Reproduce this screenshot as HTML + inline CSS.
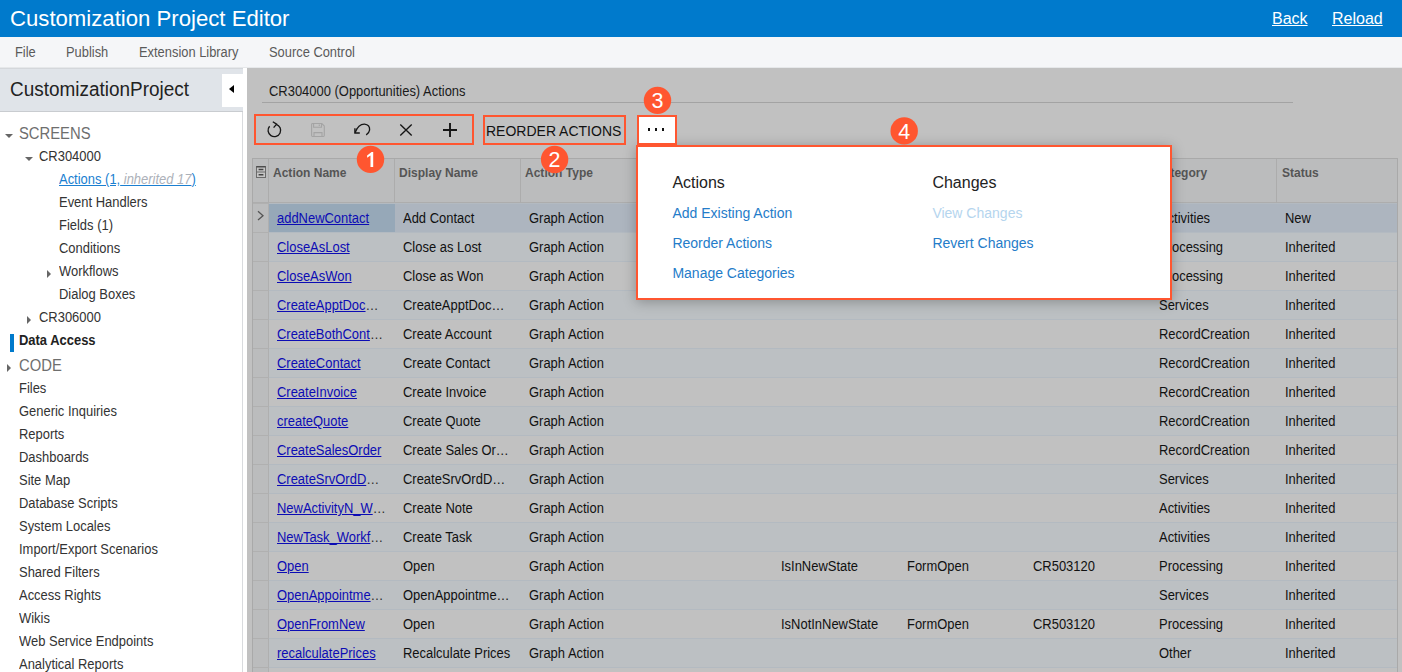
<!DOCTYPE html>
<html>
<head>
<meta charset="utf-8">
<style>
*{box-sizing:border-box;margin:0;padding:0}
html,body{width:1402px;height:672px;overflow:hidden;background:#c1c1c1;font-family:"Liberation Sans",sans-serif;font-size:14px;color:#1a1a1a}
.sx{display:inline-block;transform-origin:0 50%;white-space:nowrap}
#hdr{position:absolute;left:0;top:0;width:1402px;height:37px;background:#007acc;color:#fff}
#hdr .t{position:absolute;left:10px;top:6px;font-size:22px;line-height:26px;white-space:nowrap}
#hdr .l{position:absolute;top:9px;font-size:16px;line-height:20px;color:#fff;white-space:nowrap}
#hdr .l .sx{text-decoration:underline}
#menu{position:absolute;left:0;top:37px;width:1402px;height:31px;background:#f5f6f8;border-bottom:1px solid #e6e8ea}
#menu div{position:absolute;top:7px;font-size:14px;line-height:16px;color:#5a5a5a;white-space:nowrap}
#lp{position:absolute;left:0;top:68px;width:247px;height:604px;background:#fff}
#lph{position:absolute;left:0;top:0;width:243px;height:44px;background:#e0e4e9;border-top:1px solid #d4d7db;border-bottom:1px solid #c9ccd0}
#lph .t{position:absolute;left:10px;top:8px;font-size:20px;line-height:24px;color:#222;white-space:nowrap}
#lph .btn{position:absolute;left:222px;top:5px;width:21px;height:33px;background:#fff}
#lph .btn i{position:absolute;left:7px;top:11px;width:0;height:0;border-top:4px solid transparent;border-bottom:4px solid transparent;border-right:5px solid #000}
#lpb{position:absolute;left:0;top:44px;width:243px;height:560px;border-right:1px solid #d9dbde}
.ti{position:absolute;font-size:14px;line-height:16px;color:#333;white-space:nowrap}
.ti.g{font-size:16px;line-height:18px;color:#6e6e6e}
.ti.b{font-weight:bold;color:#222}
.ti.a{color:#1a7fd1}
.ti.a .sx{text-decoration:underline}
.ti.a i{color:#acb1b9}
.ard{position:absolute;width:0;height:0;border-left:4px solid transparent;border-right:4px solid transparent;border-top:4px solid #666}
.arr{position:absolute;width:0;height:0;border-top:4px solid transparent;border-bottom:4px solid transparent;border-left:4px solid #666}
#main{position:absolute;left:247px;top:68px;width:1155px;height:604px;background:#c1c1c1}

#ttl{position:absolute;left:269px;top:83px;font-size:14px;line-height:16px;color:#1a1a1a;white-space:nowrap}
#ttlu{position:absolute;left:262px;top:102px;width:1031px;height:1px;background:#a3a3a3}
.ob{position:absolute;border:2px solid #ff5630}
.cir{position:absolute;width:27px;height:27px;border-radius:50%;background:#ff5630;color:#fff;font-size:21px;line-height:28px;text-align:center}
.ic{position:absolute}
#grid{position:absolute;left:252px;top:158px;width:1146px;height:520px;border-left:1px solid #a9a9a9;border-top:1px solid #a9a9a9;border-right:1px solid #a9a9a9;background:#c1c1c1;overflow:hidden}
#gh{position:absolute;left:0;top:0;width:1146px;height:44px;background:#bbbcbd;border-bottom:1px solid #adadad}
#gh .c{position:absolute;top:0;height:44px;border-left:1px solid #acacac;font-size:13px;font-weight:bold;color:#555;line-height:15px;padding:6px 0 0 4px;white-space:nowrap}
.r{position:absolute;left:0;width:1146px;height:29px;border-top:1px solid #b3bac1}
.r.e{background:#bcc0c3}
.r.s{background:#adb5bf}
.r .i{position:absolute;left:0;top:-1px;width:16px;height:29px;background:#bbbcbd;border-top:1px solid #b0b0b0;border-right:1px solid #afafaf}
.r .c{position:absolute;top:0;height:28px;font-size:14px;line-height:16px;padding:6px 0 0 8px;white-space:nowrap;color:#111}
.r .c.a{color:#0c0cb4}
.r .c.a u{text-decoration:underline}
.r .c.a b{font-weight:normal;color:#2a2a2a}
#pop{position:absolute;left:636px;top:145px;width:536px;height:155px;background:#fff;border:2px solid #ff5630;box-shadow:0 2px 12px rgba(0,0,0,.27)}
#pop .h{position:absolute;font-size:16px;line-height:18px;color:#222;white-space:nowrap}
#pop .l{position:absolute;font-size:14px;line-height:16px;color:#247cc9;white-space:nowrap}
#pop .l.d{color:#b5d5ee}
#more{position:absolute;left:637px;top:115px;width:40px;height:30px;background:#fff;border:2px solid #ff5630}
#more i{position:absolute;top:11.2px;width:2.2px;height:2.4px;background:#111}
</style>
</head>
<body>
<div id="hdr"><div class="t"><span class="sx" style="transform:scaleX(1.007)">Customization Project Editor</span></div><div class="l" style="left:1272px"><span class="sx" style="transform:scaleX(1)">Back</span></div><div class="l" style="left:1332px"><span class="sx" style="transform:scaleX(1)">Reload</span></div></div>
<div id="menu"><div style="left:15px"><span class="sx" style="transform:scaleX(0.92)">File</span></div><div style="left:66px"><span class="sx" style="transform:scaleX(0.92)">Publish</span></div><div style="left:139px"><span class="sx" style="transform:scaleX(0.92)">Extension Library</span></div><div style="left:269px"><span class="sx" style="transform:scaleX(0.92)">Source Control</span></div></div>
<div id="lp">
 <div id="lph"><div class="t"><span class="sx" style="transform:scaleX(0.947)">CustomizationProject</span></div><div class="btn"><i></i></div></div>
 <div id="lpb"></div>
</div>
<div class="ti g" style="left:19px;top:124.5px"><span class="sx" style="transform:scaleX(0.925)">SCREENS</span></div>
<div class="ti " style="left:39px;top:148.0px"><span class="sx" style="transform:scaleX(0.925)">CR304000</span></div>
<div class="ti a" style="left:59px;top:171.0px"><span class="sx" style="transform:scaleX(0.925)">Actions (1,<i> inherited 17</i>)</span></div>
<div class="ti " style="left:59px;top:194.0px"><span class="sx" style="transform:scaleX(0.925)">Event Handlers</span></div>
<div class="ti " style="left:59px;top:217.0px"><span class="sx" style="transform:scaleX(0.925)">Fields (1)</span></div>
<div class="ti " style="left:59px;top:240.0px"><span class="sx" style="transform:scaleX(0.925)">Conditions</span></div>
<div class="ti " style="left:59px;top:263.0px"><span class="sx" style="transform:scaleX(0.925)">Workflows</span></div>
<div class="ti " style="left:59px;top:286.0px"><span class="sx" style="transform:scaleX(0.925)">Dialog Boxes</span></div>
<div class="ti " style="left:39px;top:309.0px"><span class="sx" style="transform:scaleX(0.925)">CR306000</span></div>
<div class="ti b" style="left:19px;top:332.0px"><span class="sx" style="transform:scaleX(0.925)">Data Access</span></div>
<div class="ti g" style="left:19px;top:356.5px"><span class="sx" style="transform:scaleX(0.925)">CODE</span></div>
<div class="ti " style="left:19px;top:380.0px"><span class="sx" style="transform:scaleX(0.925)">Files</span></div>
<div class="ti " style="left:19px;top:403.0px"><span class="sx" style="transform:scaleX(0.925)">Generic Inquiries</span></div>
<div class="ti " style="left:19px;top:426.0px"><span class="sx" style="transform:scaleX(0.925)">Reports</span></div>
<div class="ti " style="left:19px;top:449.0px"><span class="sx" style="transform:scaleX(0.925)">Dashboards</span></div>
<div class="ti " style="left:19px;top:472.0px"><span class="sx" style="transform:scaleX(0.925)">Site Map</span></div>
<div class="ti " style="left:19px;top:495.0px"><span class="sx" style="transform:scaleX(0.925)">Database Scripts</span></div>
<div class="ti " style="left:19px;top:518.0px"><span class="sx" style="transform:scaleX(0.925)">System Locales</span></div>
<div class="ti " style="left:19px;top:541.0px"><span class="sx" style="transform:scaleX(0.925)">Import/Export Scenarios</span></div>
<div class="ti " style="left:19px;top:564.0px"><span class="sx" style="transform:scaleX(0.925)">Shared Filters</span></div>
<div class="ti " style="left:19px;top:587.0px"><span class="sx" style="transform:scaleX(0.925)">Access Rights</span></div>
<div class="ti " style="left:19px;top:610.0px"><span class="sx" style="transform:scaleX(0.925)">Wikis</span></div>
<div class="ti " style="left:19px;top:633.0px"><span class="sx" style="transform:scaleX(0.925)">Web Service Endpoints</span></div>
<div class="ti " style="left:19px;top:656.0px"><span class="sx" style="transform:scaleX(0.925)">Analytical Reports</span></div>
<div class="ard" style="left:5px;top:134px"></div>
<div class="ard" style="left:25px;top:157px"></div>
<div class="arr" style="left:47px;top:270px"></div>
<div class="arr" style="left:27px;top:316px"></div>
<div class="arr" style="left:7.4px;top:364px"></div>
<div style="position:absolute;left:10px;top:334px;width:4px;height:18px;background:#007acc"></div>
<div id="main"></div>
<div id="ttl"><span class="sx" style="transform:scaleX(0.925)">CR304000 (Opportunities) Actions</span></div><div id="ttlu"></div>
<div id="grid">
<div id="gh">
<div class="c" style="left:15px;width:126px"><span class="sx" style="transform:scaleX(0.925)">Action Name</span></div>
<div class="c" style="left:141px;width:126px"><span class="sx" style="transform:scaleX(0.925)">Display Name</span></div>
<div class="c" style="left:267px;width:126px"><span class="sx" style="transform:scaleX(0.925)">Action Type</span></div>
<div class="c" style="left:393px;width:126px"><span class="sx" style="transform:scaleX(0.925)"></span></div>
<div class="c" style="left:519px;width:126px"><span class="sx" style="transform:scaleX(0.925)"></span></div>
<div class="c" style="left:645px;width:126px"><span class="sx" style="transform:scaleX(0.925)"></span></div>
<div class="c" style="left:771px;width:126px"><span class="sx" style="transform:scaleX(0.925)"></span></div>
<div class="c" style="left:897px;width:126px"><span class="sx" style="transform:scaleX(0.925)">Category</span></div>
<div class="c" style="left:1023px;width:122px;padding-left:5.4px"><span class="sx" style="transform:scaleX(0.925)">Status</span></div>
</div>
<div class="r s" style="top:44px"><div class="i"></div>
<div class="c a" style="left:16px;background:#96a8b8;width:126px"><span class="sx" style="transform:scaleX(0.925)"><u>addNewContact</u></span></div>
<div class="c" style="left:142px"><span class="sx" style="transform:scaleX(0.925)">Add Contact</span></div>
<div class="c" style="left:268px"><span class="sx" style="transform:scaleX(0.925)">Graph Action</span></div>
<div class="c" style="left:898px"><span class="sx" style="transform:scaleX(0.925)">Activities</span></div>
<div class="c" style="left:1024px"><span class="sx" style="transform:scaleX(0.925)">New</span></div>
</div>
<div class="r e" style="top:73px"><div class="i"></div>
<div class="c a" style="left:16px"><span class="sx" style="transform:scaleX(0.925)"><u>CloseAsLost</u></span></div>
<div class="c" style="left:142px"><span class="sx" style="transform:scaleX(0.925)">Close as Lost</span></div>
<div class="c" style="left:268px"><span class="sx" style="transform:scaleX(0.925)">Graph Action</span></div>
<div class="c" style="left:898px"><span class="sx" style="transform:scaleX(0.925)">Processing</span></div>
<div class="c" style="left:1024px"><span class="sx" style="transform:scaleX(0.925)">Inherited</span></div>
</div>
<div class="r " style="top:102px"><div class="i"></div>
<div class="c a" style="left:16px"><span class="sx" style="transform:scaleX(0.925)"><u>CloseAsWon</u></span></div>
<div class="c" style="left:142px"><span class="sx" style="transform:scaleX(0.925)">Close as Won</span></div>
<div class="c" style="left:268px"><span class="sx" style="transform:scaleX(0.925)">Graph Action</span></div>
<div class="c" style="left:898px"><span class="sx" style="transform:scaleX(0.925)">Processing</span></div>
<div class="c" style="left:1024px"><span class="sx" style="transform:scaleX(0.925)">Inherited</span></div>
</div>
<div class="r e" style="top:131px"><div class="i"></div>
<div class="c a" style="left:16px"><span class="sx" style="transform:scaleX(0.925)"><u>CreateApptDoc</u><b>&hellip;</b></span></div>
<div class="c" style="left:142px"><span class="sx" style="transform:scaleX(0.925)">CreateApptDoc&hellip;</span></div>
<div class="c" style="left:268px"><span class="sx" style="transform:scaleX(0.925)">Graph Action</span></div>
<div class="c" style="left:898px"><span class="sx" style="transform:scaleX(0.925)">Services</span></div>
<div class="c" style="left:1024px"><span class="sx" style="transform:scaleX(0.925)">Inherited</span></div>
</div>
<div class="r " style="top:160px"><div class="i"></div>
<div class="c a" style="left:16px"><span class="sx" style="transform:scaleX(0.925)"><u>CreateBothCont</u><b>&hellip;</b></span></div>
<div class="c" style="left:142px"><span class="sx" style="transform:scaleX(0.925)">Create Account</span></div>
<div class="c" style="left:268px"><span class="sx" style="transform:scaleX(0.925)">Graph Action</span></div>
<div class="c" style="left:898px"><span class="sx" style="transform:scaleX(0.925)">RecordCreation</span></div>
<div class="c" style="left:1024px"><span class="sx" style="transform:scaleX(0.925)">Inherited</span></div>
</div>
<div class="r e" style="top:189px"><div class="i"></div>
<div class="c a" style="left:16px"><span class="sx" style="transform:scaleX(0.925)"><u>CreateContact</u></span></div>
<div class="c" style="left:142px"><span class="sx" style="transform:scaleX(0.925)">Create Contact</span></div>
<div class="c" style="left:268px"><span class="sx" style="transform:scaleX(0.925)">Graph Action</span></div>
<div class="c" style="left:898px"><span class="sx" style="transform:scaleX(0.925)">RecordCreation</span></div>
<div class="c" style="left:1024px"><span class="sx" style="transform:scaleX(0.925)">Inherited</span></div>
</div>
<div class="r " style="top:218px"><div class="i"></div>
<div class="c a" style="left:16px"><span class="sx" style="transform:scaleX(0.925)"><u>CreateInvoice</u></span></div>
<div class="c" style="left:142px"><span class="sx" style="transform:scaleX(0.925)">Create Invoice</span></div>
<div class="c" style="left:268px"><span class="sx" style="transform:scaleX(0.925)">Graph Action</span></div>
<div class="c" style="left:898px"><span class="sx" style="transform:scaleX(0.925)">RecordCreation</span></div>
<div class="c" style="left:1024px"><span class="sx" style="transform:scaleX(0.925)">Inherited</span></div>
</div>
<div class="r e" style="top:247px"><div class="i"></div>
<div class="c a" style="left:16px"><span class="sx" style="transform:scaleX(0.925)"><u>createQuote</u></span></div>
<div class="c" style="left:142px"><span class="sx" style="transform:scaleX(0.925)">Create Quote</span></div>
<div class="c" style="left:268px"><span class="sx" style="transform:scaleX(0.925)">Graph Action</span></div>
<div class="c" style="left:898px"><span class="sx" style="transform:scaleX(0.925)">RecordCreation</span></div>
<div class="c" style="left:1024px"><span class="sx" style="transform:scaleX(0.925)">Inherited</span></div>
</div>
<div class="r " style="top:276px"><div class="i"></div>
<div class="c a" style="left:16px"><span class="sx" style="transform:scaleX(0.925)"><u>CreateSalesOrder</u></span></div>
<div class="c" style="left:142px"><span class="sx" style="transform:scaleX(0.925)">Create Sales Or&hellip;</span></div>
<div class="c" style="left:268px"><span class="sx" style="transform:scaleX(0.925)">Graph Action</span></div>
<div class="c" style="left:898px"><span class="sx" style="transform:scaleX(0.925)">RecordCreation</span></div>
<div class="c" style="left:1024px"><span class="sx" style="transform:scaleX(0.925)">Inherited</span></div>
</div>
<div class="r e" style="top:305px"><div class="i"></div>
<div class="c a" style="left:16px"><span class="sx" style="transform:scaleX(0.925)"><u>CreateSrvOrdD</u><b>&hellip;</b></span></div>
<div class="c" style="left:142px"><span class="sx" style="transform:scaleX(0.925)">CreateSrvOrdD&hellip;</span></div>
<div class="c" style="left:268px"><span class="sx" style="transform:scaleX(0.925)">Graph Action</span></div>
<div class="c" style="left:898px"><span class="sx" style="transform:scaleX(0.925)">Services</span></div>
<div class="c" style="left:1024px"><span class="sx" style="transform:scaleX(0.925)">Inherited</span></div>
</div>
<div class="r " style="top:334px"><div class="i"></div>
<div class="c a" style="left:16px"><span class="sx" style="transform:scaleX(0.925)"><u>NewActivityN_W</u><b>&hellip;</b></span></div>
<div class="c" style="left:142px"><span class="sx" style="transform:scaleX(0.925)">Create Note</span></div>
<div class="c" style="left:268px"><span class="sx" style="transform:scaleX(0.925)">Graph Action</span></div>
<div class="c" style="left:898px"><span class="sx" style="transform:scaleX(0.925)">Activities</span></div>
<div class="c" style="left:1024px"><span class="sx" style="transform:scaleX(0.925)">Inherited</span></div>
</div>
<div class="r e" style="top:363px"><div class="i"></div>
<div class="c a" style="left:16px"><span class="sx" style="transform:scaleX(0.925)"><u>NewTask_Workf</u><b>&hellip;</b></span></div>
<div class="c" style="left:142px"><span class="sx" style="transform:scaleX(0.925)">Create Task</span></div>
<div class="c" style="left:268px"><span class="sx" style="transform:scaleX(0.925)">Graph Action</span></div>
<div class="c" style="left:898px"><span class="sx" style="transform:scaleX(0.925)">Activities</span></div>
<div class="c" style="left:1024px"><span class="sx" style="transform:scaleX(0.925)">Inherited</span></div>
</div>
<div class="r " style="top:392px"><div class="i"></div>
<div class="c a" style="left:16px"><span class="sx" style="transform:scaleX(0.925)"><u>Open</u></span></div>
<div class="c" style="left:142px"><span class="sx" style="transform:scaleX(0.925)">Open</span></div>
<div class="c" style="left:268px"><span class="sx" style="transform:scaleX(0.925)">Graph Action</span></div>
<div class="c" style="left:520px"><span class="sx" style="transform:scaleX(0.925)">IsInNewState</span></div>
<div class="c" style="left:646px"><span class="sx" style="transform:scaleX(0.925)">FormOpen</span></div>
<div class="c" style="left:772px"><span class="sx" style="transform:scaleX(0.925)">CR503120</span></div>
<div class="c" style="left:898px"><span class="sx" style="transform:scaleX(0.925)">Processing</span></div>
<div class="c" style="left:1024px"><span class="sx" style="transform:scaleX(0.925)">Inherited</span></div>
</div>
<div class="r e" style="top:421px"><div class="i"></div>
<div class="c a" style="left:16px"><span class="sx" style="transform:scaleX(0.925)"><u>OpenAppointme</u><b>&hellip;</b></span></div>
<div class="c" style="left:142px"><span class="sx" style="transform:scaleX(0.925)">OpenAppointme&hellip;</span></div>
<div class="c" style="left:268px"><span class="sx" style="transform:scaleX(0.925)">Graph Action</span></div>
<div class="c" style="left:898px"><span class="sx" style="transform:scaleX(0.925)">Services</span></div>
<div class="c" style="left:1024px"><span class="sx" style="transform:scaleX(0.925)">Inherited</span></div>
</div>
<div class="r " style="top:450px"><div class="i"></div>
<div class="c a" style="left:16px"><span class="sx" style="transform:scaleX(0.925)"><u>OpenFromNew</u></span></div>
<div class="c" style="left:142px"><span class="sx" style="transform:scaleX(0.925)">Open</span></div>
<div class="c" style="left:268px"><span class="sx" style="transform:scaleX(0.925)">Graph Action</span></div>
<div class="c" style="left:520px"><span class="sx" style="transform:scaleX(0.925)">IsNotInNewState</span></div>
<div class="c" style="left:646px"><span class="sx" style="transform:scaleX(0.925)">FormOpen</span></div>
<div class="c" style="left:772px"><span class="sx" style="transform:scaleX(0.925)">CR503120</span></div>
<div class="c" style="left:898px"><span class="sx" style="transform:scaleX(0.925)">Processing</span></div>
<div class="c" style="left:1024px"><span class="sx" style="transform:scaleX(0.925)">Inherited</span></div>
</div>
<div class="r e" style="top:479px"><div class="i"></div>
<div class="c a" style="left:16px"><span class="sx" style="transform:scaleX(0.925)"><u>recalculatePrices</u></span></div>
<div class="c" style="left:142px"><span class="sx" style="transform:scaleX(0.925)">Recalculate Prices</span></div>
<div class="c" style="left:268px"><span class="sx" style="transform:scaleX(0.925)">Graph Action</span></div>
<div class="c" style="left:898px"><span class="sx" style="transform:scaleX(0.925)">Other</span></div>
<div class="c" style="left:1024px"><span class="sx" style="transform:scaleX(0.925)">Inherited</span></div>
</div>
<div class="r " style="top:508px"><div class="i"></div>
</div>
<svg style="position:absolute;left:0;top:0" width="17" height="80" viewBox="253 159 17 80" fill="none">
<rect x="256.5" y="166.5" width="9" height="11" stroke="#6b6b6b" stroke-width="1" fill="#c6c6c6"/>
<path d="M256.5 166.8 H265.5" stroke="#4a4a4a" stroke-width="1.4"/>
<path d="M256.5 172 H265.5" stroke="#6b6b6b" stroke-width="1"/>
<path d="M258.6 169.6 H263.4 M258.6 174.8 H263.4" stroke="#444" stroke-width="1.5"/>
<path d="M258 211.3 L263 215.7 L258 220.1" stroke="#555" stroke-width="1.3"/>
</svg>
</div>
<div class="ob" style="left:254px;top:114px;width:220px;height:31px"></div>
<svg class="ic" style="left:254px;top:114px" width="220" height="31" viewBox="254 114 220 31" fill="none" stroke="#161616" stroke-width="1.35">
<path d="M276.2 124.3 A6.3 6.3 0 1 1 269.6 126.2"/><path d="M272.8 121.8 L276.6 124.2 L273.6 127.6"/>
<g stroke="#a4a4a4" stroke-width="1.1"><path d="M312.5 123.5 H321.8 L324.3 126 V135.6 Q324.3 136.5 323.4 136.5 H312.5 Q311.6 136.5 311.6 135.6 V124.4 Q311.6 123.5 312.5 123.5 Z"/><path d="M313.6 123.7 V127.3 H321.5 V123.7"/><path d="M314 136.4 V132.6 H322 V136.4"/><path d="M319.3 124.6 V126"/></g>
<path d="M355 132.8 Q358.5 124 364.5 124.2 Q370 124.8 369.6 130 Q369.2 133 366.2 134.8"/><path d="M354.9 128.3 V133 H359.8"/>
<path d="M400.3 124.4 L411.7 135.6 M411.7 124.4 L400.3 135.6"/>
<path d="M443 130 H457 M450 123 V137" stroke-width="1.9"/>
</svg>
<div class="ob" style="left:483px;top:115px;width:143px;height:30px"></div>
<div style="position:absolute;left:486px;top:123px;font-size:14px;line-height:16px;color:#111;white-space:nowrap">REORDER ACTIONS</div>
<div id="pop">
<div class="h" style="left:34.4px;top:27px">Actions</div><div class="h" style="left:294.4px;top:27px">Changes</div>
<div class="l" style="left:34.4px;top:58px">Add Existing Action</div><div class="l" style="left:34.4px;top:88px">Reorder Actions</div><div class="l" style="left:34.4px;top:118px">Manage Categories</div>
<div class="l d" style="left:294.4px;top:58px">View Changes</div><div class="l" style="left:294.4px;top:88px">Revert Changes</div>
</div>
<div id="more"><i style="left:8.5px"></i><i style="left:15.9px"></i><i style="left:23.3px"></i></div>
<svg style="position:absolute;left:340px;top:80px" width="600" height="100" viewBox="340 80 600 100"><circle cx="370.5" cy="159.4" r="13.7" fill="#ff5630"/><path fill="#fff" d="M373.2 151.9 L373.2 167.1 L370.5 167.1 L370.5 155.4 L367.1 157.8 L367.1 155.6 L371.6 151.9 Z"/><circle cx="554.6" cy="159.5" r="13.7" fill="#ff5630"/><text x="554.6" y="167.2" text-anchor="middle" font-family="Liberation Sans" font-size="21.5" fill="#fff">2</text><circle cx="657.5" cy="100.4" r="13.7" fill="#ff5630"/><text x="657.5" y="108.10000000000001" text-anchor="middle" font-family="Liberation Sans" font-size="21.5" fill="#fff">3</text><circle cx="904.2" cy="130.9" r="13.7" fill="#ff5630"/><text x="904.2" y="138.6" text-anchor="middle" font-family="Liberation Sans" font-size="21.5" fill="#fff">4</text></svg>
</body>
</html>
